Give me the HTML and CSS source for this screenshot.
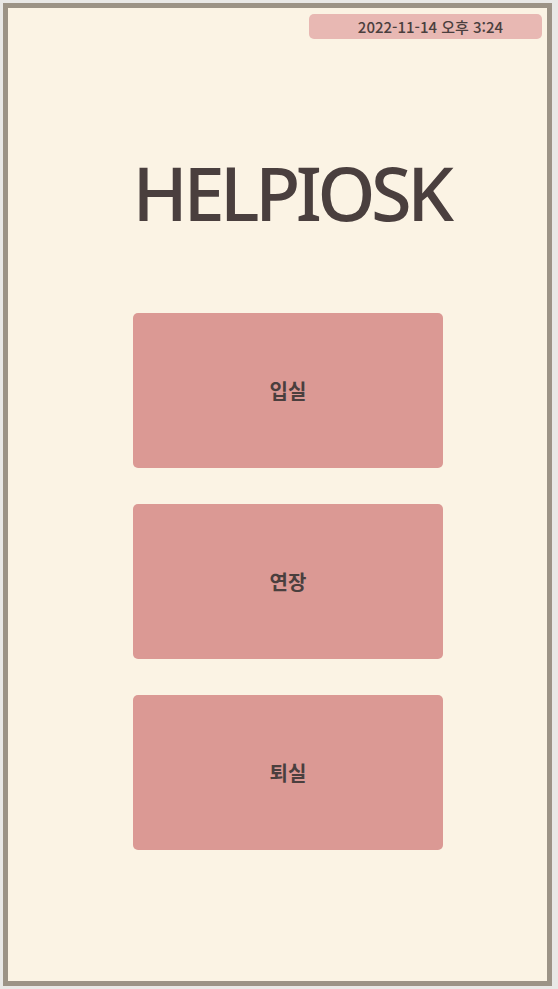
FILE: index.html
```html
<!DOCTYPE html>
<html lang="ko">
<head>
<meta charset="utf-8">
<title>HELPIOSK</title>
<link rel="stylesheet" href="styles.css">
</head>
<body>
<div class="frame">
  <header class="topbar">
    <div class="clock">2022-11-14 오후 3:24</div>
  </header>
  <main class="main">
    <h1 class="title">HELPIOSK</h1>
    <nav class="menu">
      <button class="menu-btn">입실</button>
      <button class="menu-btn">연장</button>
      <button class="menu-btn">퇴실</button>
    </nav>
  </main>
</div>
</body>
</html>
```

FILE: styles.css
```css
html, body {
  margin: 0;
  padding: 0;
  background: #e9e8e6;
}
body {
  padding: 3px 6px 3px 3px;
  font-family: "Noto Sans CJK KR", "Noto Sans", sans-serif;
  color: #4a3f3e;
}
.frame {
  box-sizing: border-box;
  height: 983px;
  border: 5px solid #9c9386;
  background: #fbf3e4;
  display: flex;
  flex-direction: column;
}
.topbar {
  display: flex;
  justify-content: flex-end;
  padding: 6px 5px 0 0;
}
.clock {
  width: 233px;
  height: 25px;
  box-sizing: border-box;
  background: #e8b8b3;
  border-radius: 5px;
  font-size: 15px;
  font-weight: 500;
  line-height: 25px;
  text-align: center;
  padding-left: 10px;
  color: #4a3f3e;
}
.main {
  display: flex;
  flex-direction: column;
  align-items: center;
  padding-left: 21px;
}
.title {
  margin: 116px 0 0 6px;
  font-family: "Noto Sans", sans-serif;
  font-weight: 500;
  font-size: 74px;
  line-height: 76px;
  height: 76px;
  letter-spacing: -4.5px;
  color: #4a3f3e;
}
.menu {
  display: flex;
  flex-direction: column;
  gap: 36px;
  margin-top: 82px;
}
.menu-btn {
  width: 310px;
  height: 155px;
  border: none;
  border-radius: 5px;
  background: #db9994;
  font-family: "Noto Sans CJK KR", sans-serif;
  font-size: 20px;
  font-weight: 700;
  color: #4a3f3e;
  padding: 0;
}
```
